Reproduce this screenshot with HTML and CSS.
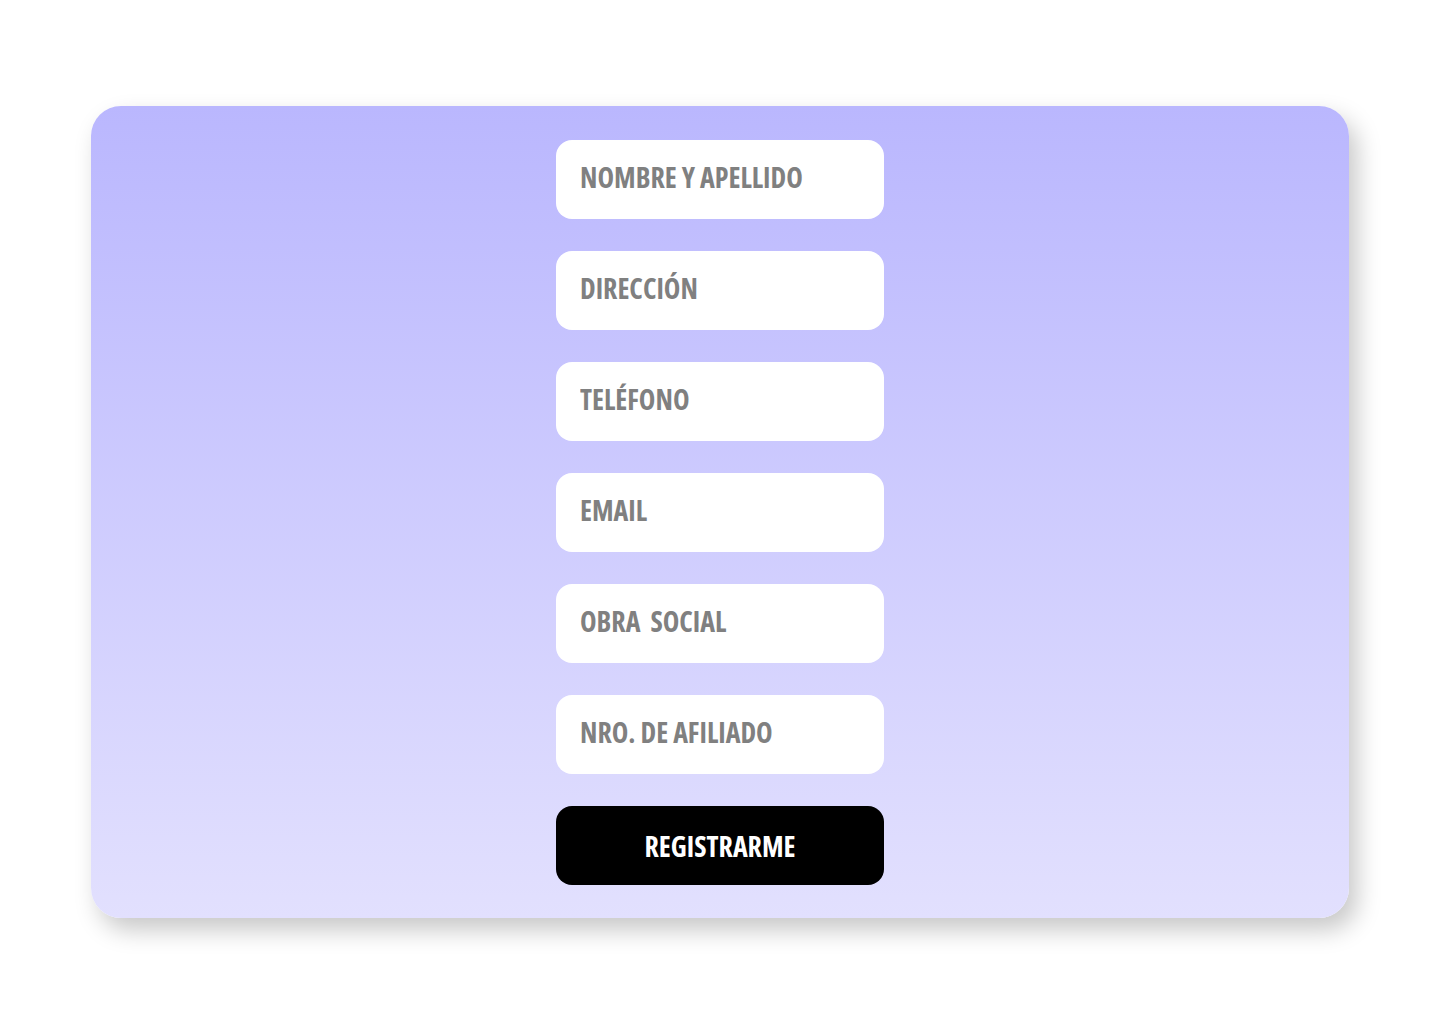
FILE: index.html
```html
<!DOCTYPE html>
<html lang="es">
<head>
<meta charset="utf-8">
<title>Registro</title>
<link rel="stylesheet" href="styles.css">
</head>
<body>
<main class="page">
  <form class="card">
    <input class="field" type="text" placeholder="NOMBRE Y APELLIDO">
    <input class="field" type="text" placeholder="DIRECCIÓN">
    <input class="field" type="text" placeholder="TELÉFONO">
    <input class="field" type="text" placeholder="EMAIL">
    <input class="field" type="text" placeholder="OBRA  SOCIAL">
    <input class="field" type="text" placeholder="NRO. DE AFILIADO">
    <button class="submit" type="button">REGISTRARME</button>
  </form>
</main>
</body>
</html>
```
FILE: styles.css
```css
html, body {
  margin: 0;
  padding: 0;
  background: #ffffff;
}
.page {
  padding: 106px 91px;
  box-sizing: border-box;
  height: 1024px;
}
.card {
  height: 812px;
  box-sizing: border-box;
  border-radius: 30px;
  background: linear-gradient(180deg, #bab7fe 0%, #e2e0fe 100%);
  box-shadow: 8px 12px 24px rgba(0, 0, 0, 0.22);
  padding-top: 34px;
  display: flex;
  flex-direction: column;
  align-items: center;
  gap: 32px;
}
.field, .submit {
  width: 328px;
  height: 79px;
  box-sizing: border-box;
  border: none;
  border-radius: 16px;
  font-family: "Open Sans", sans-serif;
  font-stretch: 75%;
  font-weight: 700;
  font-size: 28px;
  letter-spacing: 0;
  outline: none;
  margin: 0;
}
.field {
  background: #ffffff;
  padding: 0 24px 5px;
  color: #808080;
}
.field::placeholder {
  color: #808080;
  opacity: 1;
}
.submit {
  background: #000000;
  color: #ffffff;
  text-align: center;
  padding: 0;
}
```
